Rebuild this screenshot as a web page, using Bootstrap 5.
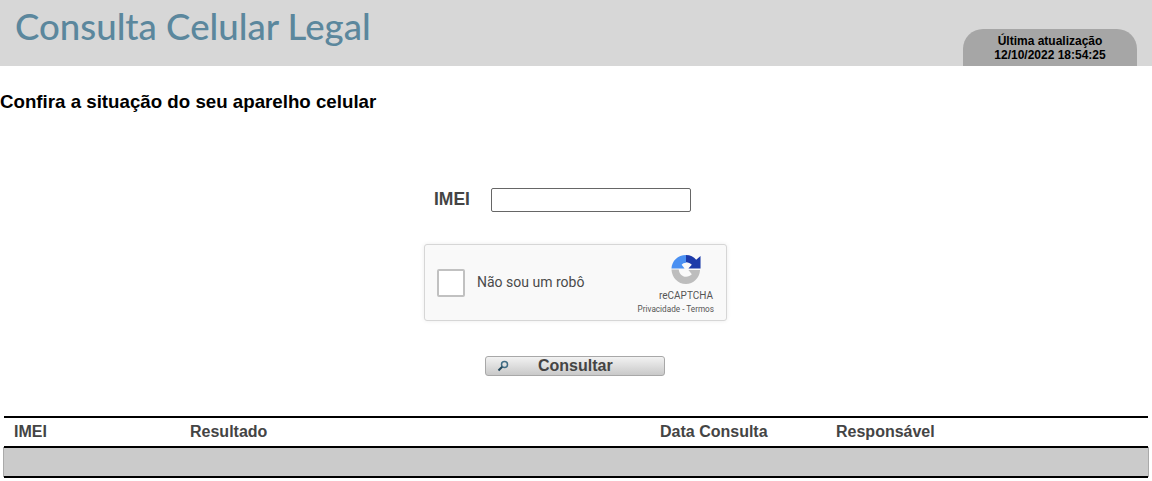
<!DOCTYPE html>
<html lang="pt-BR">
<head>
  <meta charset="UTF-8">
  <meta name="viewport" content="width=device-width, initial-scale=1.0">
  <title>Consulta Celular Legal</title>
  <link href="https://cdn.jsdelivr.net/npm/bootstrap@5.3.0/dist/css/bootstrap.min.css" rel="stylesheet">
  <style>
    body {
      font-family: "Liberation Sans", Arial, sans-serif;
      background-color: #fff;
      color: #000;
    }

    .top-bar {
      height: 66px;
      background-color: #d7d7d7;
      padding: 0 15px 0 15px;
    }

    .app-title {
      font-family: Lato, "Open Sans", sans-serif;
      font-size: 36.6px;
      line-height: 52px;
      color: #5b879d;
      margin: 0;
    }

    .update-box {
      width: 174px;
      height: 37px;
      padding-top: 5px;
      border-radius: 20px 20px 0 0;
      background-color: #a6a6a6;
      font-size: 12px;
      font-weight: 700;
      line-height: 14px;
      text-align: center;
    }

    .page-heading {
      font-size: 18.72px;
      font-weight: 700;
      line-height: 21px;
      margin: 25px 0 0 0;
    }

    .imei-row {
      margin: 76px 0 0 434px;
      height: 24px;
    }

    .imei-label {
      width: 57px;
      font-size: 17.5px;
      font-weight: 700;
      color: #444;
      margin: 0 0 2px 0;
    }

    .imei-input {
      width: 200px;
      height: 24px;
      margin-bottom: 0;
      border: 1px solid #666;
      border-radius: 2px;
      padding: 0 4px;
      background: #fff;
    }

    .captcha-box {
      width: 303px;
      height: 77px;
      margin: 32px 0 0 424px;
      background-color: #f9f9f9;
      border: 1px solid #d6d6d6;
      border-radius: 3px;
      box-shadow: 0 0 4px rgba(0, 0, 0, .08);
      padding: 0 12px;
      font-family: Roboto, sans-serif;
    }

    .captcha-check {
      width: 28px;
      height: 28px;
      background: #fff;
      border: 2px solid #c1c1c1;
      border-radius: 2px;
      margin-right: 12px;
    }

    .captcha-text {
      font-size: 14px;
      color: #4a4a4a;
    }

    .captcha-brand {
      width: 78px;
      padding-top: 4px;
      color: #555;
      text-align: right;
    }

    .captcha-brand svg { display: block; margin: 0 12px 2px auto; }
    .captcha-name { font-size: 10px; line-height: 13px; margin: 4px 1px 0 0; }
    .captcha-links { font-size: 8.2px; line-height: 12px; white-space: nowrap; margin-top: 1px; }

    .search-btn {
      width: 180px;
      height: 20px;
      margin: 35px 0 0 485px;
      padding: 0 0 0 11px;
      display: flex;
      align-items: center;
      background: linear-gradient(#f2f2f2, #c9c9c9);
      border: 1px solid #a8a8a8;
      border-radius: 3px;
      font-size: 16px;
      font-weight: 700;
      color: #444;
    }

    .search-btn span { margin-left: 29px; }

    .result-table {
      width: 1144px;
      margin: 40px 0 0 4px;
      border-collapse: collapse;
      table-layout: fixed;
      font-size: 16px;
      color: #444;
    }

    .result-table th {
      height: 30px;
      padding: 0 0 0 10px;
      font-weight: 700;
      text-align: left;
      border-top: 2px solid #000;
      border-bottom: 2px solid #000;
    }

    .result-table td {
      height: 30px;
      padding: 0;
      background-color: #cbcbcb;
      border-bottom: 2px solid #000;
      box-shadow: -1px 0 0 #aaa, 1px 0 0 #aaa;
    }

    .col-imei, .col-date { width: 176px; }
    .col-result { width: 470px; }
  </style>
</head>
<body>
  <header class="top-bar d-flex justify-content-between align-items-end">
    <h1 class="app-title align-self-start">Consulta Celular Legal</h1>
    <div class="update-box">Última atualização<br>12/10/2022 18:54:25</div>
  </header>

  <h2 class="page-heading">Confira a situação do seu aparelho celular</h2>

  <form>
    <div class="imei-row d-flex align-items-center">
      <label for="imei" class="imei-label">IMEI</label>
      <input type="text" id="imei" class="imei-input">
    </div>

    <div class="captcha-box d-flex align-items-center">
      <div class="captcha-check"></div>
      <div class="captcha-text flex-grow-1">Não sou um robô</div>
      <div class="captcha-brand">
        <svg width="32" height="31" viewBox="0 0 32 32" aria-hidden="true">
          <path fill="#4a90f2" d="M1 15C1.500 7 7.500 1 16 1v8c-2 0-3.500.8-4.500 2l3 4H1z"/>
          <path fill="#1c3aa9" d="M16 1c4.500 0 8 2 10.500 5L31 2v13H18.500l3.500-4c-1.500-1.500-3.500-2.500-6-2.500z"/>
          <path fill="#bdbdbd" d="M1 16h7.500c.5 4.500 3.500 7.500 7.500 7.500 2.500 0 4.500-1 6-2.500l-3.500-4.500h12C30 25 23.500 31 16 31 7.500 31 1.500 24.500 1 16z"/>
        </svg>
        <div class="captcha-name">reCAPTCHA</div>
        <div class="captcha-links">Privacidade - Termos</div>
      </div>
    </div>

    <button type="button" class="search-btn">
      <svg width="12" height="12" viewBox="0 0 12 12" aria-hidden="true">
        <circle cx="7.500" cy="4.500" r="3" fill="none" stroke="#3f6c84" stroke-width="1.500"/>
        <path d="M5.200 6.800 1.500 10.500" stroke="#24485c" stroke-width="2"/>
      </svg>
      <span>Consultar</span>
    </button>
  </form>

  <table class="result-table">
    <colgroup>
      <col class="col-imei"><col class="col-result"><col class="col-date"><col>
    </colgroup>
    <thead>
      <tr><th>IMEI</th><th>Resultado</th><th>Data Consulta</th><th>Responsável</th></tr>
    </thead>
    <tbody>
      <tr><td colspan="4"></td></tr>
    </tbody>
  </table>

  <script src="https://cdn.jsdelivr.net/npm/bootstrap@5.3.0/dist/js/bootstrap.bundle.min.js"></script>
</body>
</html>
